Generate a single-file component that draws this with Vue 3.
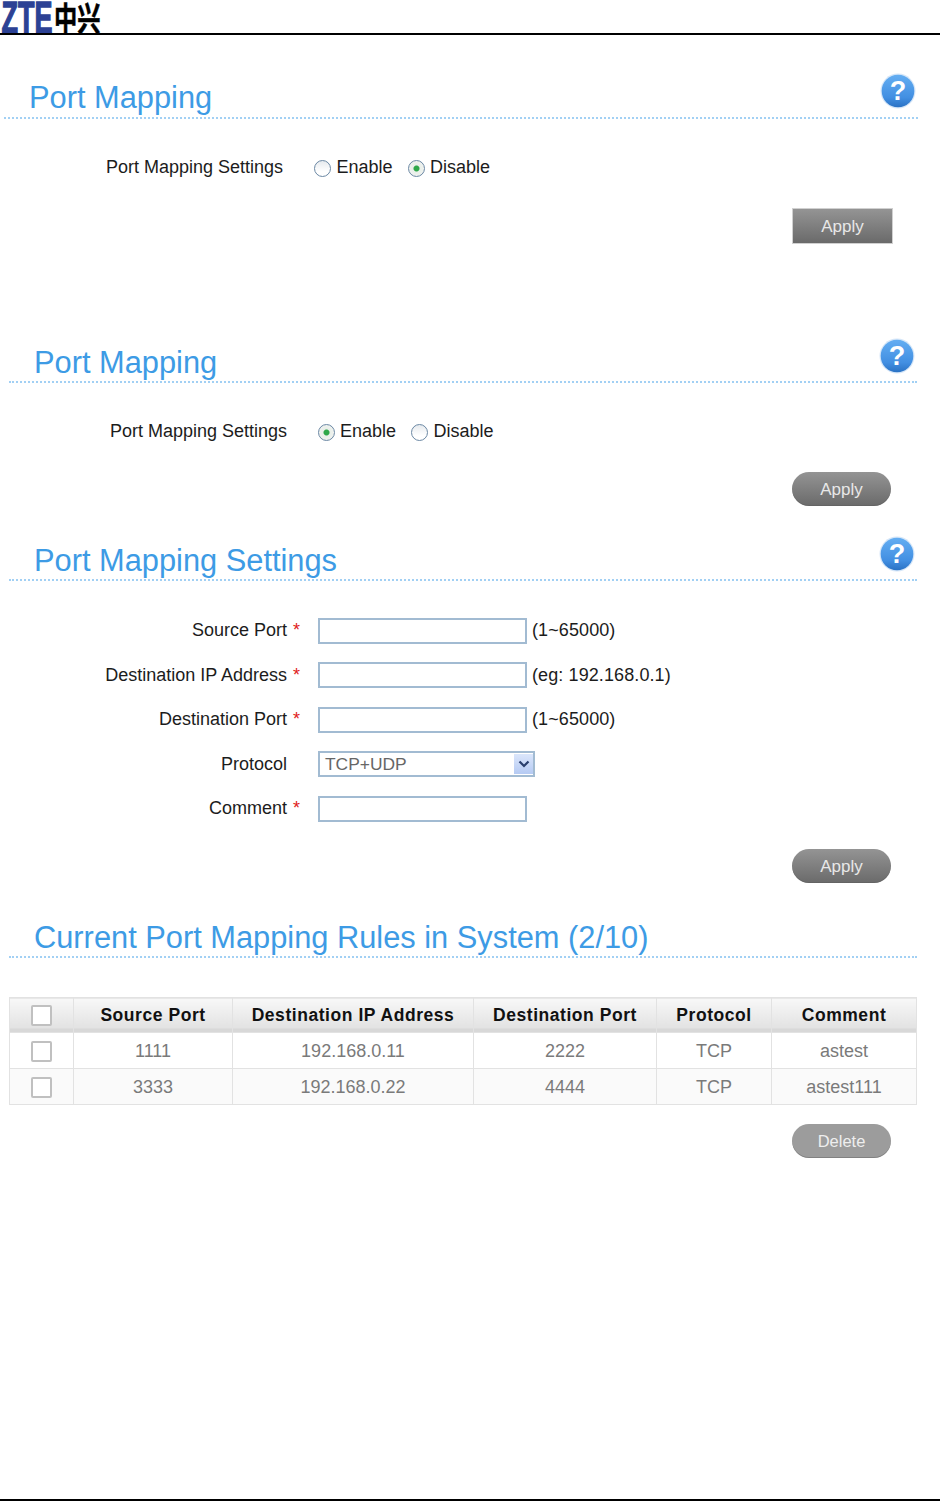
<script setup>
const fields = [
  { label: 'Source Port', req: true, hint: '(1~65000)' },
  { label: 'Destination IP Address', req: true, hint: '(eg: 192.168.0.1)' },
  { label: 'Destination Port', req: true, hint: '(1~65000)' },
  { label: 'Protocol', select: true },
  { label: 'Comment', req: true }
]
const rows = [
  ['1111', '192.168.0.11', '2222', 'TCP', 'astest'],
  ['3333', '192.168.0.22', '4444', 'TCP', 'astest111']
]
const cols = ['Source Port', 'Destination IP Address', 'Destination Port', 'Protocol', 'Comment']
</script>

<template>
  <div class="page">
    <header class="top">
      <svg class="logo" width="102" height="33" viewBox="0 0 102 33">
        <defs>
          <linearGradient id="helpFill" x1="0" y1="0" x2="0" y2="1">
            <stop offset="0" stop-color="#64aef2" />
            <stop offset="0.7" stop-color="#428fe2" />
            <stop offset="1" stop-color="#2a72c4" />
          </linearGradient>
          <symbol id="helpIcon" viewBox="0 0 36 36">
            <circle cx="18" cy="18" r="17.5" fill="#d5e6f8" />
            <circle cx="18" cy="18" r="16.3" fill="url(#helpFill)" />
            <text x="18" y="27" text-anchor="middle" fill="#fff" font-family="Liberation Sans" font-weight="bold" font-size="27">?</text>
          </symbol>
        </defs>
        <text class="zte" transform="translate(1.5 33) scale(0.6 1)">ZTE</text>
        <text class="cn" transform="translate(54 31) scale(0.97 1.38)">中兴</text>
      </svg>
    </header>

    <section class="sec first">
      <div class="head">
        <h2>Port Mapping</h2>
        <svg class="help" width="36" height="36"><use href="#helpIcon" /></svg>
      </div>
      <div class="switch">
        <span class="sw-label">Port Mapping Settings</span>
        <input type="radio" name="a" class="radio" />
        <span class="opt">Enable</span>
        <input type="radio" name="a" class="radio" checked />
        <span class="opt">Disable</span>
      </div>
      <div class="actions"><button class="btn square">Apply</button></div>
    </section>

    <section class="sec second">
      <div class="head">
        <h2>Port Mapping</h2>
        <svg class="help" width="36" height="36"><use href="#helpIcon" /></svg>
      </div>
      <div class="switch">
        <span class="sw-label">Port Mapping Settings</span>
        <input type="radio" name="b" class="radio" checked />
        <span class="opt">Enable</span>
        <input type="radio" name="b" class="radio" />
        <span class="opt">Disable</span>
      </div>
      <div class="actions"><button class="btn">Apply</button></div>
    </section>

    <section class="sec third">
      <div class="head">
        <h2>Port Mapping Settings</h2>
        <svg class="help" width="36" height="36"><use href="#helpIcon" /></svg>
      </div>
      <div class="form">
        <div v-for="f in fields" :key="f.label" class="field">
          <span class="f-label">{{ f.label }}</span>
          <span class="star">{{ f.req ? '*' : '' }}</span>
          <div v-if="f.select" class="select">
            <span>TCP+UDP</span>
            <span class="arrow">
              <svg width="12" height="8" viewBox="0 0 12 8"><path d="M1.5 1.5 6 6l4.5-4.5" fill="none" stroke="#2a3f6d" stroke-width="2.2" /></svg>
            </span>
          </div>
          <input v-else class="text" type="text" />
          <span v-if="f.hint" class="hint">{{ f.hint }}</span>
        </div>
      </div>
      <div class="actions"><button class="btn">Apply</button></div>
    </section>

    <section class="sec fourth">
      <div class="head">
        <h2>Current Port Mapping Rules in System (2/10)</h2>
      </div>
      <table class="rules">
        <colgroup>
          <col class="c0" /><col class="c1" /><col class="c2" /><col class="c3" /><col class="c4" /><col class="c5" />
        </colgroup>
        <thead>
          <tr>
            <th><input type="checkbox" class="check" /></th>
            <th v-for="c in cols" :key="c">{{ c }}</th>
          </tr>
        </thead>
        <tbody>
          <tr v-for="r in rows" :key="r[0]">
            <td><input type="checkbox" class="check" /></td>
            <td v-for="(v, i) in r" :key="i">{{ v }}</td>
          </tr>
        </tbody>
      </table>
      <div class="actions del"><button class="btn light">Delete</button></div>
    </section>

    <div class="bottom"></div>
  </div>
</template>

<style>
html, body { margin: 0; background: #fff; }
</style>

<style scoped>
.page {
  width: 940px;
  height: 1501px;
  display: flex;
  flex-direction: column;
  font-family: "Liberation Sans", Arial, sans-serif;
  color: #1c1c1c;
  overflow: hidden;
}
.top {
  height: 33px;
  border-bottom: 2px solid #000;
}
.logo { display: block; }
.zte {
  font: bold 45px "Liberation Sans", sans-serif;
  fill: #2c4194;
  stroke: #2c4194;
  stroke-width: 1.4px;
}
.cn {
  font: bold 24px "Noto Sans CJK SC", sans-serif;
  fill: #000;
  stroke: #000;
  stroke-width: 0.4px;
}
.sec { width: 908px; margin-left: 9px; }
.first { width: 914px; margin-left: 4px; margin-top: 35px; }
.second { margin-top: 90px; }
.third, .fourth { margin-top: 26px; }

.head {
  height: 47px;
  display: flex;
  align-items: flex-end;
  justify-content: space-between;
  border-bottom: 2px dotted #a2d0f4;
  position: relative;
}
h2 {
  margin: 0 0 -1px 25px;
  font-size: 30.8px;
  line-height: 38px;
  font-weight: normal;
  color: #3d9be5;
}
.first h2 { margin-bottom: 0; }
.help { position: absolute; right: 2px; top: 4px; }
.first .help { top: 3px; }

.switch {
  display: flex;
  align-items: center;
  height: 30px;
  margin-top: 33px;
  font-size: 18px;
}
.first .switch { padding-left: 102px; }
.second .switch { padding-left: 101px; }
.sw-label { width: 208px; flex: none; }
.second .sw-label { width: 207.5px; }
.opt { margin-left: 5.5px; margin-right: 15px; }
.radio {
  appearance: none;
  width: 17px;
  height: 17px;
  margin: 2px 0 0;
  border: 1.5px solid #6b88a4;
  border-radius: 50%;
  background: linear-gradient(#e6eaee, #fff 70%);
  flex: none;
  box-sizing: border-box;
}
.radio:checked {
  background: radial-gradient(circle, #2fa84a 0 2.5px, #e9efe9 3.5px, #f4f4f4 100%);
}

.actions {
  display: flex;
  justify-content: flex-end;
  margin-top: 26px;
  padding-right: 26px;
}
.first .actions { padding-right: 25px; }
.third .actions { margin-top: 25.5px; }
.actions.del { margin-top: 19px; }
.btn {
  width: 99px;
  height: 34px;
  border: 0;
  border-radius: 17px;
  padding: 2px 0 0;
  font: 17px "Liberation Sans", sans-serif;
  color: #e8e8e8;
  background: linear-gradient(#949494, #6a6a6a);
  box-shadow: inset 0 -1px 0 #5a5a5a66;
}
.square {
  border-radius: 0;
  width: 101px;
  height: 36px;
  border: 1px solid #d0d0d0;
  box-shadow: none;
}
.light {
  padding-top: 0;
  font-size: 16.5px;
  background: #9c9c9c;
  color: #eee;
}

.form {
  display: flex;
  flex-direction: column;
  gap: 14.5px;
  margin-top: 34.5px;
  font-size: 18px;
}
.field {
  display: flex;
  align-items: center;
  height: 30px;
}
.f-label { width: 278px; text-align: right; flex: none; }
.star { width: 31px; padding-left: 6px; box-sizing: border-box; color: #e02020; flex: none; }
.text {
  width: 209px;
  height: 26px;
  box-sizing: border-box;
  border: 2px solid #a2bbd2;
  background: #fff;
  padding: 0;
  outline: 0;
}
.hint { margin-left: 5px; letter-spacing: 0.1px; }
.select {
  width: 217px;
  height: 26px;
  box-sizing: border-box;
  border: 2px solid #a2bbd2;
  display: flex;
  align-items: center;
  justify-content: space-between;
  padding: 0 0 0 5px;
  color: #666;
  font-size: 17.4px;
}
.arrow {
  width: 19px;
  height: 20px;
  display: flex;
  align-items: center;
  justify-content: center;
  background: linear-gradient(#dbe6fb, #b5caf3);
}

.rules {
  margin-top: 39px;
  width: 907px;
  table-layout: fixed;
  border-collapse: collapse;
  font-size: 18px;
}
.c0 { width: 64px; }
.c1 { width: 159px; }
.c2 { width: 241px; }
.c3 { width: 183px; }
.c4 { width: 115px; }
.c5 { width: 145px; }
.rules th, .rules td {
  border: 1px solid #e2e2e2;
  padding: 1px 0 0;
  text-align: center;
  height: 34px;
}
.rules th {
  height: 33px;
  font-size: 17.5px;
  letter-spacing: 0.55px;
  color: #111;
  background: linear-gradient(#f8f8f8 0, #e2e2e2 88%, #d8d8d8 88%, #d8d8d8 100%);
}
.rules td { color: #7a7a7a; }
.rules tbody tr:nth-child(2) td { background: #fafafa; }
.check {
  appearance: none;
  display: block;
  width: 21px;
  height: 21px;
  margin: 0 auto;
  border: 2px solid #c0c0c0;
  border-radius: 2px;
  background: #fff;
  box-sizing: border-box;
}

.bottom {
  margin-top: auto;
  height: 2px;
  background: #000;
}
</style>
